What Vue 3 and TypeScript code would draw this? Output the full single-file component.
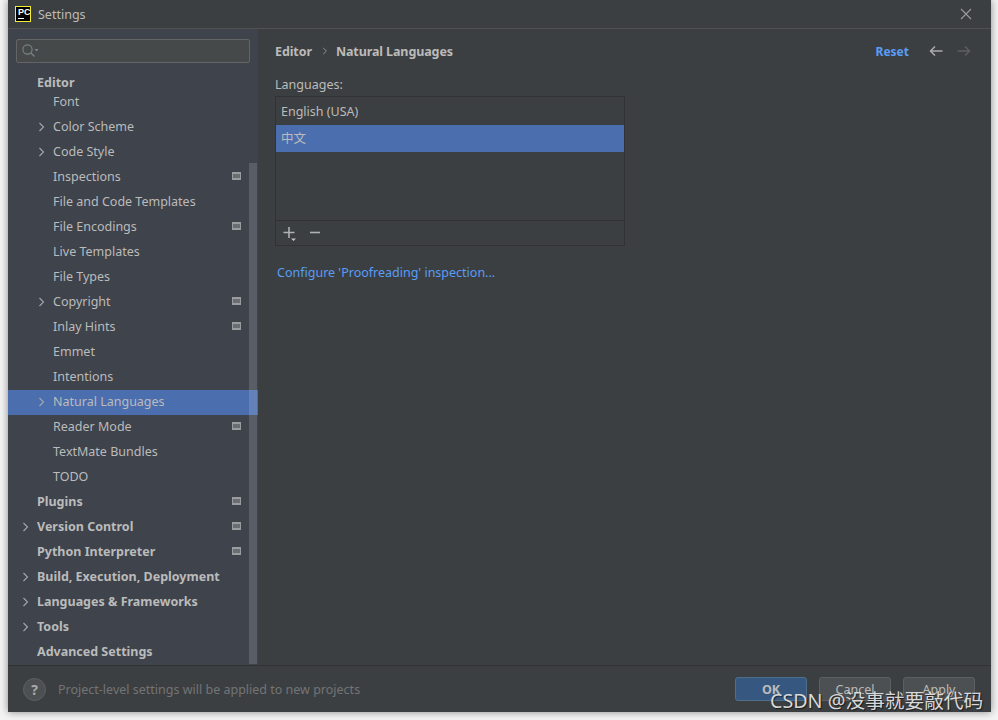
<script setup lang="ts">
interface Row {
  label: string
  depth: number
  bold?: boolean
  arrow?: boolean
  badge?: boolean
  selected?: boolean
}
const rows: Row[] = [
  { label: 'Font', depth: 1 },
  { label: 'Color Scheme', depth: 1, arrow: true },
  { label: 'Code Style', depth: 1, arrow: true },
  { label: 'Inspections', depth: 1, badge: true },
  { label: 'File and Code Templates', depth: 1 },
  { label: 'File Encodings', depth: 1, badge: true },
  { label: 'Live Templates', depth: 1 },
  { label: 'File Types', depth: 1 },
  { label: 'Copyright', depth: 1, arrow: true, badge: true },
  { label: 'Inlay Hints', depth: 1, badge: true },
  { label: 'Emmet', depth: 1 },
  { label: 'Intentions', depth: 1 },
  { label: 'Natural Languages', depth: 1, arrow: true, selected: true },
  { label: 'Reader Mode', depth: 1, badge: true },
  { label: 'TextMate Bundles', depth: 1 },
  { label: 'TODO', depth: 1 },
  { label: 'Plugins', depth: 0, bold: true, badge: true },
  { label: 'Version Control', depth: 0, bold: true, arrow: true, badge: true },
  { label: 'Python Interpreter', depth: 0, bold: true, badge: true },
  { label: 'Build, Execution, Deployment', depth: 0, bold: true, arrow: true },
  { label: 'Languages & Frameworks', depth: 0, bold: true, arrow: true },
  { label: 'Tools', depth: 0, bold: true, arrow: true },
  { label: 'Advanced Settings', depth: 0, bold: true },
]
</script>

<template>
  <div class="page">
    <div class="window">
      <header class="titlebar">
        <div class="logo"><span class="logo-text">PC</span><span class="logo-line"></span></div>
        <span class="title">Settings</span>
        <svg class="close" width="12" height="12" viewBox="0 0 12 12">
          <path d="M1 1l10 10M11 1L1 11" stroke="#9a9c9e" stroke-width="1.1" fill="none" />
        </svg>
      </header>

      <div class="body">
        <aside class="sidebar">
          <div class="search">
            <svg width="20" height="16" viewBox="0 0 20 16">
              <circle cx="6.5" cy="6.5" r="4.6" stroke="#7f8386" stroke-width="1.1" fill="none" />
              <path d="M10 10l3.5 3.5" stroke="#7f8386" stroke-width="1.3" fill="none" />
              <path d="M13.5 6h4l-2 2.4z" fill="#7f8386" />
            </svg>
          </div>
          <div class="group-head">Editor</div>
          <div
            v-for="row in rows"
            :key="row.label"
            class="row"
            :class="{ selected: row.selected, bold: row.bold, top: row.depth === 0 }"
          >
            <svg v-if="row.arrow" class="chev" width="8" height="10" viewBox="0 0 8 10">
              <path d="M1.5 1l4 4-4 4" stroke="#a4a8aa" stroke-width="1.1" fill="none" />
            </svg>
            <span class="label">{{ row.label }}</span>
            <span v-if="row.badge" class="badge"><i></i></span>
          </div>
          <div class="scrollbar"></div>
        </aside>

        <main class="main">
          <div class="crumbs">
            <span class="crumb">Editor</span>
            <svg width="6" height="8" viewBox="0 0 6 8" class="crumb-sep">
              <path d="M1.2 0.8L4.4 4 1.2 7.2" stroke="#8e9092" stroke-width="1" fill="none" />
            </svg>
            <span class="crumb">Natural Languages</span>
            <span class="spacer"></span>
            <span class="reset">Reset</span>
            <svg class="nav" width="14" height="12" viewBox="0 0 14 12">
              <path d="M13.5 6H1.5M6 1.5L1.5 6 6 10.5" stroke="#a9abad" stroke-width="1.5" fill="none" />
            </svg>
            <svg class="nav next" width="14" height="12" viewBox="0 0 14 12">
              <path d="M0.5 6h12M8 1.5L12.5 6 8 10.5" stroke="#5c5f61" stroke-width="1.5" fill="none" />
            </svg>
          </div>

          <div class="field-label">Languages:</div>
          <div class="list">
            <div class="items">
              <div class="item">English (USA)</div>
              <div class="item current">中文</div>
            </div>
            <div class="toolbar">
              <svg class="tool" width="16" height="16" viewBox="0 0 16 16">
                <path d="M6 2v11M0.5 7.5h11" stroke="#afb1b3" stroke-width="1.6" fill="none" />
                <path d="M8 13.5h5l-2.5 2.5z" fill="#c4c6c8" />
              </svg>
              <svg class="tool" width="12" height="16" viewBox="0 0 12 16">
                <path d="M1 7.5h10" stroke="#afb1b3" stroke-width="1.6" fill="none" />
              </svg>
            </div>
          </div>
          <div class="link">Configure 'Proofreading' inspection...</div>
        </main>
      </div>

      <footer class="footer">
        <span class="help">?</span>
        <span class="hint">Project-level settings will be applied to new projects</span>
        <span class="spacer"></span>
        <button class="btn primary">OK</button>
        <button class="btn">Cancel</button>
        <button class="btn">Apply</button>
      </footer>
    </div>
    <div class="watermark">CSDN @没事就要敲代码</div>
  </div>
</template>

<style>
html,
body {
  margin: 0;
  background: #f4f4f4;
}
</style>

<style scoped>
.page {
  position: relative;
  box-sizing: border-box;
  width: 998px;
  height: 720px;
  padding: 0 7px 8px 8px;
  background: #f4f4f4;
  overflow: hidden;
  font-family: "Noto Sans", "Noto Sans CJK SC", sans-serif;
  font-size: 12.5px;
}
.window {
  height: 712px;
  display: flex;
  flex-direction: column;
  background: #3c3f41;
  box-shadow: 0 0 8px rgba(0, 0, 0, 0.45);
  color: #bbbbbb;
}
.titlebar {
  height: 28px;
  flex: none;
  display: flex;
  align-items: center;
  padding: 0 19px 0 7px;
  border-bottom: 1px solid #515151;
  background: #3c3f41;
}
.logo {
  position: relative;
  box-sizing: border-box;
  width: 16px;
  height: 16px;
  background: #000;
  border: 1px solid #f5ee30;
}
.logo-text {
  position: absolute;
  left: 2px;
  top: 1px;
  font-size: 9px;
  line-height: 9px;
  font-weight: 700;
  color: #fff;
  font-family: "Liberation Sans", sans-serif;
}
.logo-line {
  position: absolute;
  left: 2px;
  bottom: 2px;
  width: 6px;
  height: 1px;
  background: #fff;
}
.title {
  margin-left: 7px;
  color: #bbbbbb;
}
.close {
  margin-left: auto;
}
.body {
  flex: 1;
  display: flex;
  min-height: 0;
}
.sidebar {
  position: relative;
  box-sizing: border-box;
  width: 250px;
  flex: none;
  background: #3e434c;
  overflow: hidden;
  padding-top: 10px;
}
.search {
  box-sizing: border-box;
  height: 24px;
  margin: 0 8px 0 8px;
  background: #45494a;
  border: 1px solid #646464;
  border-radius: 2px;
  display: flex;
  align-items: center;
  padding-left: 4px;
}
.group-head {
  height: 15px;
  margin-top: 12px;
  line-height: 15px;
  padding-left: 29px;
  font-weight: 700;
  color: #bbbbbb;
}
.row {
  position: relative;
  box-sizing: border-box;
  height: 25px;
  display: flex;
  align-items: center;
  padding-left: 45px;
  padding-bottom: 2px;
  color: #bbbbbb;
  white-space: nowrap;
}
.row.top {
  padding-left: 29px;
}
.row.bold .label {
  font-weight: 700;
}
.row.selected {
  background: #4b6eaf;
}
.chev {
  position: absolute;
  left: 30px;
  top: 7px;
}
.row.top .chev {
  left: 14px;
}
.badge {
  position: absolute;
  right: 17px;
  top: 7px;
  box-sizing: border-box;
  width: 9px;
  height: 8px;
  border: 1px solid #9a9d9f;
  border-top-width: 2px;
  border-bottom-width: 2px;
  display: block;
  background: #6a6e72;
}
.badge i {
  display: block;
}
.scrollbar {
  position: absolute;
  right: 1px;
  top: 134px;
  width: 8px;
  height: 501px;
  background: rgba(255, 255, 255, 0.14);
}
.main {
  flex: 1;
  min-width: 0;
  padding: 11px 20px 0 17px;
  background: #3c3f41;
}
.crumbs {
  display: flex;
  align-items: center;
  height: 22px;
}
.crumb {
  font-weight: 700;
  color: #bbbbbb;
  letter-spacing: -0.1px;
}
.crumb-sep {
  margin: 0 8px 0 10px;
}
.spacer {
  flex: 1;
}
.reset {
  color: #589df6;
  font-weight: 700;
  font-size: 12px;
}
.nav {
  margin-left: 20px;
}
.nav.next {
  margin-left: 14px;
}
.field-label {
  margin-top: 12px;
  height: 22px;
  line-height: 22px;
  color: #bbbbbb;
}
.list {
  box-sizing: border-box;
  width: 350px;
  height: 150px;
  border: 1px solid #323232;
  display: flex;
  flex-direction: column;
}
.items {
  flex: 1;
  padding-top: 1px;
  border-bottom: 1px solid #323232;
}
.item {
  height: 27px;
  line-height: 27px;
  padding-left: 5px;
  color: #bbbbbb;
}
.item.current {
  background: #4b6eaf;
}
.toolbar {
  height: 24px;
  flex: none;
  display: flex;
  align-items: center;
  padding-left: 7px;
  gap: 10px;
}
.tool {
  display: block;
}
.link {
  margin-top: 16px;
  margin-left: 2px;
  height: 22px;
  line-height: 22px;
  color: #589df6;
}
.footer {
  height: 47px;
  flex: none;
  box-sizing: border-box;
  border-top: 1px solid #323232;
  display: flex;
  align-items: center;
  padding: 0 16px 0 15px;
  background: #3c3f41;
}
.help {
  box-sizing: border-box;
  width: 23px;
  height: 23px;
  border-radius: 50%;
  background: #4c5052;
  border: 1px solid #5e6060;
  color: #a9abad;
  font-weight: 700;
  font-size: 14px;
  text-align: center;
  line-height: 21px;
}
.hint {
  margin-left: 12px;
  color: #727476;
}
.btn {
  box-sizing: border-box;
  width: 72px;
  height: 24px;
  margin-left: 12px;
  padding: 0;
  background: #4c5052;
  border: 1px solid #5e6060;
  border-radius: 3px;
  color: #bbbbbb;
  font: inherit;
}
.btn.primary {
  background: #365880;
  border-color: #4c708c;
  color: #bbbbbb;
  font-weight: 700;
}
.watermark {
  position: absolute;
  left: 770px;
  top: 688px;
  color: #d8d8d8;
  font-size: 19.7px;
  line-height: 26px;
  white-space: nowrap;
  text-shadow: 1px 1px 1px rgba(0, 0, 0, 0.6);
}
</style>
